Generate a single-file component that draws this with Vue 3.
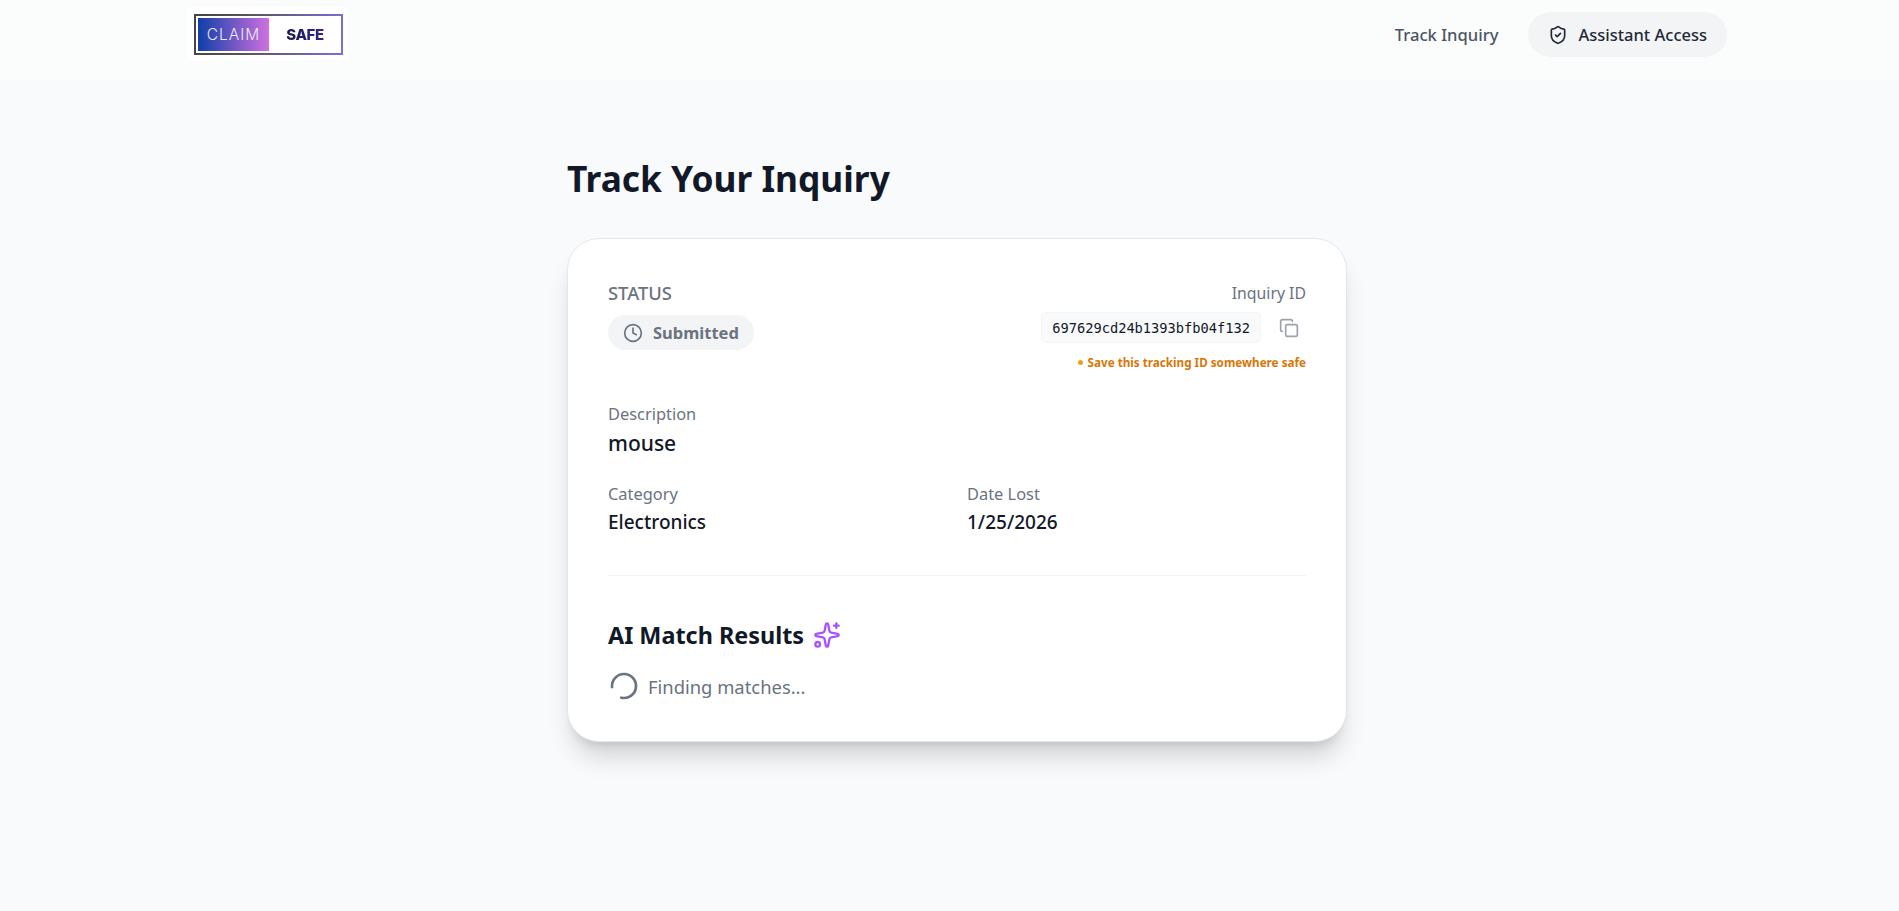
<script setup>
const details = [
  { label: 'Category', value: 'Electronics' },
  { label: 'Date Lost', value: '1/25/2026' },
]
</script>

<template>
  <div class="page">
    <header class="topbar">
      <div class="logo-wrap">
        <div class="logo">
          <span class="logo-claim">CLAIM</span>
          <span class="logo-safe">SAFE</span>
        </div>
      </div>
      <nav class="nav">
        <a class="nav-link">Track Inquiry</a>
        <a class="nav-pill">
          <svg width="20" height="20" viewBox="0 0 24 24" fill="none" stroke="currentColor" stroke-width="2" stroke-linecap="round" stroke-linejoin="round">
            <path d="M20 13c0 5-3.5 7.5-7.66 8.95a1 1 0 0 1-.67-.01C7.5 20.5 4 18 4 13V6a1 1 0 0 1 1-1c2 0 4.5-1.2 6.24-2.72a1.17 1.17 0 0 1 1.52 0C14.51 3.81 17 5 19 5a1 1 0 0 1 1 1z" />
            <path d="m9 12 2 2 4-4" />
          </svg>
          Assistant Access
        </a>
      </nav>
    </header>

    <main class="content">
      <h1 class="title">Track Your Inquiry</h1>
      <section class="card">
        <div class="card-top">
          <div>
            <div class="status-label">STATUS</div>
            <div class="status-pill">
              <svg width="20" height="20" viewBox="0 0 24 24" fill="none" stroke="currentColor" stroke-width="2" stroke-linecap="round" stroke-linejoin="round">
                <circle cx="12" cy="12" r="10" />
                <path d="M12 6v6l4 2" />
              </svg>
              Submitted
            </div>
          </div>
          <div class="id-block">
            <div class="muted">Inquiry ID</div>
            <div class="id-row">
              <code class="id-code">697629cd24b1393bfb04f132</code>
              <svg class="copy" width="20" height="20" viewBox="0 0 24 24" fill="none" stroke="currentColor" stroke-width="2" stroke-linecap="round" stroke-linejoin="round">
                <rect x="8" y="8" width="14" height="14" rx="2" ry="2" />
                <path d="M4 16c-1.1 0-2-.9-2-2V4c0-1.1.9-2 2-2h10c1.1 0 2 .9 2 2" />
              </svg>
            </div>
            <div class="id-note"><span class="dot"></span>Save this tracking ID somewhere safe</div>
          </div>
        </div>

        <div class="muted label-wide">Description</div>
        <div class="description">mouse</div>

        <div class="detail-grid">
          <div v-for="item in details" :key="item.label">
            <div class="muted label-wide">{{ item.label }}</div>
            <div class="detail-value">{{ item.value }}</div>
          </div>
        </div>

        <div class="matches">
          <h2 class="matches-title">
            AI Match Results
            <svg width="28" height="28" viewBox="0 0 24 24" fill="none" stroke="#a855f7" stroke-width="2" stroke-linecap="round" stroke-linejoin="round">
              <path d="M11.017 2.814a1 1 0 0 1 1.966 0l1.051 5.558a2 2 0 0 0 1.594 1.594l5.558 1.051a1 1 0 0 1 0 1.966l-5.558 1.051a2 2 0 0 0-1.594 1.594l-1.051 5.558a1 1 0 0 1-1.966 0l-1.051-5.558a2 2 0 0 0-1.594-1.594l-5.558-1.051a1 1 0 0 1 0-1.966l5.558-1.051a2 2 0 0 0 1.594-1.594z" />
              <path d="M20 2v4" />
              <path d="M22 4h-4" />
              <circle cx="4" cy="20" r="2" />
            </svg>
          </h2>
          <div class="finding">
            <svg width="32" height="32" viewBox="0 0 24 24" fill="none" stroke="#6b7280" stroke-width="2" stroke-linecap="round" stroke-linejoin="round">
              <path d="M21 12a9 9 0 1 1-6.219-8.56" transform="rotate(175 12 12)" />
            </svg>
            Finding matches...
          </div>
        </div>
      </section>
    </main>
  </div>
</template>

<style>
html, body {
  margin: 0;
  background: #f9fafb;
}
</style>

<style scoped>
.page {
  min-height: 911px;
  background: #f9fafb;
  font-family: "Noto Sans", "Open Sans", sans-serif;
  color: #111827;
}

.topbar {
  height: 79px;
  box-sizing: border-box;
  padding: 0 172px 10px 187px;
  background: #fbfcfc;
  display: flex;
  align-items: center;
  justify-content: space-between;
}

.logo-wrap {
  width: 160px;
  height: 53px;
  margin-bottom: 2px;
  box-sizing: border-box;
  padding: 7px 4px 5px 7px;
  background: #fff;
}

.logo {
  width: 149px;
  height: 41px;
  box-sizing: border-box;
  padding: 2px;
  display: flex;
  align-items: stretch;
  border: 2px solid;
  border-image: linear-gradient(100deg, #444 0%, #555 35%, #7a6fe0 100%) 1;
  font-family: Inter, sans-serif;
}

.logo-claim {
  width: 71px;
  display: flex;
  align-items: center;
  justify-content: center;
  background: linear-gradient(90deg, #0f3fa8, #d070e0);
  color: #e8ecf8;
  font-size: 15.5px;
  letter-spacing: 1px;
  font-weight: 300;
}

.logo-safe {
  flex: 1;
  display: flex;
  align-items: center;
  justify-content: center;
  padding-left: 2px;
  font-weight: 800;
  font-size: 15px;
  letter-spacing: -0.4px;
  background: linear-gradient(90deg, #0f1030, #3a2aa8);
  background-clip: text;
  color: transparent;
}

.nav {
  display: flex;
  align-items: center;
  gap: 30px;
}

.nav-link {
  font-size: 16.6px;
  font-weight: 500;
  color: #4b5563;
}

.nav-pill {
  height: 45px;
  padding: 0 20px;
  display: flex;
  align-items: center;
  gap: 10px;
  border-radius: 23px;
  background: #f3f4f6;
  font-size: 16.5px;
  font-weight: 500;
  color: #1f2937;
}

.content {
  width: 780px;
  margin-left: 567px;
  padding-top: 75px;
}

.title {
  margin: 0 0 36px;
  font-size: 35.3px;
  line-height: 48px;
  font-weight: 700;
}

.card {
  box-sizing: border-box;
  padding: 41px 40px 39px;
  background: #fff;
  border: 1px solid #e5e7eb;
  border-radius: 32px;
  box-shadow: 0 20px 25px -5px rgba(0, 0, 0, 0.15), 0 8px 10px -6px rgba(0, 0, 0, 0.12);
}

.card-top {
  display: flex;
  justify-content: space-between;
  margin-bottom: 31px;
}

.status-label {
  font-size: 18.4px;
  line-height: 26px;
  font-weight: 500;
  color: #6b7280;
  margin-bottom: 9px;
}

.status-pill {
  height: 35px;
  width: fit-content;
  padding: 0 15px;
  display: flex;
  align-items: center;
  gap: 10px;
  border-radius: 18px;
  background: #f3f4f6;
  font-size: 16.5px;
  font-weight: 700;
  color: #6b7280;
}

.id-block {
  display: flex;
  flex-direction: column;
  align-items: flex-end;
}

.muted {
  font-size: 15.8px;
  line-height: 26px;
  color: #6b7280;
}

.label-wide {
  font-size: 16.4px;
}

.id-row {
  margin-top: 6px;
  display: flex;
  align-items: center;
  gap: 18px;
}

.id-code {
  box-sizing: border-box;
  height: 31px;
  padding: 0 10px;
  display: flex;
  align-items: center;
  background: #f9fafb;
  border: 1px solid #f3f4f6;
  border-radius: 5px;
  font-family: "DejaVu Sans Mono", monospace;
  font-size: 13.7px;
  color: #111827;
}

.copy {
  color: #9ca3af;
  margin-right: 7px;
}

.id-note {
  margin-top: 11px;
  font-size: 11.7px;
  line-height: 16px;
  font-weight: 700;
  color: #d97706;
  display: flex;
  align-items: center;
  gap: 5px;
}

.dot {
  width: 5px;
  height: 5px;
  border-radius: 50%;
  background: #f59e0b;
}

.description {
  font-size: 21px;
  line-height: 32px;
  font-weight: 500;
  margin-bottom: 22px;
}

.detail-grid {
  display: grid;
  grid-template-columns: 1fr 1fr;
  gap: 20px;
}

.detail-value {
  font-size: 19px;
  line-height: 30px;
  font-weight: 500;
}

.matches {
  margin-top: 38px;
  padding-top: 43px;
  border-top: 1px solid #f3f4f6;
}

.matches-title {
  margin: 0 0 19px;
  display: flex;
  align-items: center;
  gap: 9px;
  font-size: 23.4px;
  line-height: 32px;
  font-weight: 700;
}

.finding {
  display: flex;
  align-items: center;
  gap: 8px;
  font-size: 18.4px;
  color: #6b7280;
}
</style>
